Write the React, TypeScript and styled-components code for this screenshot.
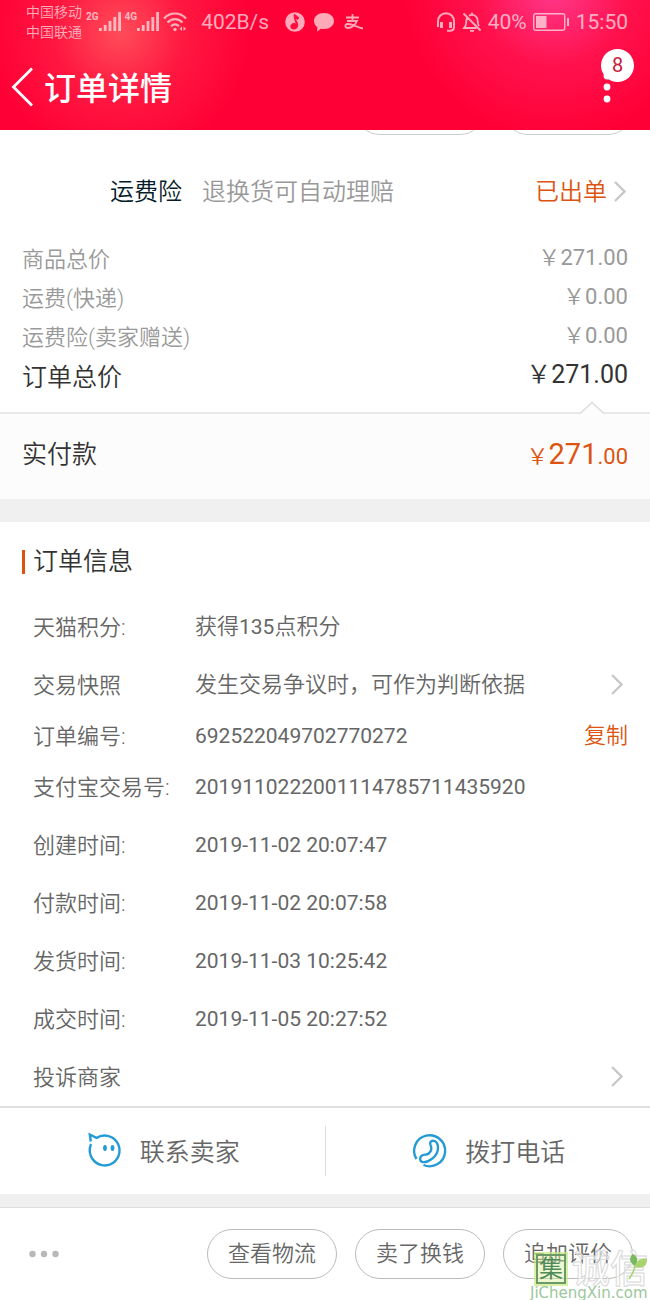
import React from 'react';
import styled, { createGlobalStyle } from 'styled-components';

const GlobalStyle = createGlobalStyle`
  * { box-sizing: border-box; }
  body {
    margin: 0;
    background: #fff;
    color: #666;
    font-family: Roboto, "Noto Sans CJK SC", sans-serif;
    font-size: 22px;
    line-height: 32px;
    font-weight: 350;
  }
  button {
    margin: 0;
    padding: 0;
    border: 0;
    background: none;
    color: inherit;
    font: inherit;
    cursor: pointer;
  }
  svg { display: block; flex: none; }
  h1, h2, dl, dt, dd { margin: 0; font-weight: inherit; }
`;

const Page = styled.div`
  position: relative;
  overflow: hidden;
`;

const Header = styled.header`
  height: 130px;
  color: #fff;
  background:
    radial-gradient(circle 130px at 120px 32px, rgba(255, 90, 96, 0.85), rgba(255, 60, 80, 0.4) 50%, transparent),
    radial-gradient(circle 150px at calc(100% - 96px) -10px, rgba(255, 70, 160, 0.8), rgba(255, 50, 120, 0.35) 50%, transparent),
    #ff0036;
`;

const StatusBar = styled.div`
  display: flex;
  align-items: center;
  justify-content: space-between;
  height: 44px;
  padding: 0 22px 0 26px;
  color: rgba(255, 225, 230, 0.75);
  font-size: 21px;
  font-weight: 400;
`;

const StatusGroup = styled.div<{ $gap: number }>`
  display: flex;
  align-items: center;
  gap: ${(p) => p.$gap}px;
`;

const Carriers = styled.div`
  font-size: 14px;
  line-height: 20px;
  font-weight: 350;
`;

const Signal = styled.div`
  display: flex;
  align-items: flex-start;
  font-size: 10px;
  line-height: 10px;
  font-weight: 700;
`;

const Speed = styled.span`
  padding: 0 8px 0 10px;
`;

const NavBar = styled.nav`
  display: flex;
  align-items: center;
  justify-content: space-between;
  height: 86px;
  padding: 0 16px 0 11px;
`;

const NavStart = styled.div`
  display: flex;
  align-items: center;
  gap: 9px;
`;

const Title = styled.h1`
  padding-top: 3px;
  font-size: 32px;
  line-height: 44px;
  font-weight: 500;
`;

const MenuButton = styled.button`
  position: relative;
  display: flex;
  width: 34px;
  height: 76px;
`;

const Badge = styled.span`
  position: absolute;
  top: 0;
  right: 0;
  width: 33px;
  height: 33px;
  border-radius: 50%;
  background: #fff;
  color: #c8203c;
  font-size: 20px;
  line-height: 33px;
  font-weight: 400;
  text-align: center;
`;

const ClippedPills = styled.div`
  display: flex;
  align-items: flex-end;
  justify-content: flex-end;
  gap: 18px;
  height: 5px;
  padding-right: 17px;
  overflow: hidden;
`;

const PillEdge = styled.span`
  width: 130px;
  height: 50px;
  border: 1px solid #ccc;
  border-radius: 25px;
`;

const InsuranceRow = styled.button`
  display: flex;
  align-items: center;
  width: 100%;
  height: 105px;
  padding: 9px 24px 0 110px;
  font-size: 24px;
`;

const InsuranceName = styled.span`
  color: #051b28;
`;

const InsuranceNote = styled.span`
  flex: 1;
  padding-left: 20px;
  color: #999;
  text-align: left;
`;

const InsuranceState = styled.span`
  margin-right: 7px;
  color: #dd5410;
`;

const PriceList = styled.dl`
  padding: 0 22px 13px;
  border-bottom: 2px solid #e8e8e8;
`;

const PriceRow = styled.div<{ $total?: boolean }>`
  display: flex;
  justify-content: space-between;
  color: ${(p) => (p.$total ? '#333' : '#999')};
  font-size: ${(p) => (p.$total ? 25 : 22)}px;
  line-height: ${(p) => (p.$total ? 42 : 39)}px;
`;

const Amount = styled.dd`
  font-weight: 400;
  line-height: 36px;
`;

const Yen = styled.span`
  font-weight: 350;
`;

const PaidRow = styled.div`
  position: relative;
  display: flex;
  align-items: center;
  justify-content: space-between;
  height: 85px;
  padding: 0 22px 3px;
  background: #fcfcfc;
  color: #333;
  font-size: 25px;
`;

const Notch = styled.svg`
  position: absolute;
  top: -13px;
  right: 45px;
`;

const PaidAmount = styled.span`
  color: #dd5410;
  font-size: 22px;
  font-weight: 400;
`;

const PaidWhole = styled.span`
  font-size: 29px;
`;

const Divider = styled.div<{ $height: number }>`
  height: ${(p) => p.$height}px;
  background: #f0f0f0;
`;

const SectionTitle = styled.h2`
  display: flex;
  align-items: center;
  gap: 8px;
  height: 76px;
  padding: 4px 22px 0;
  color: #333;
  font-size: 25px;

  &::before {
    content: '';
    width: 3px;
    height: 24px;
    background: #dd5410;
  }
`;

const InfoRow = styled.div<{ $compact?: boolean }>`
  display: flex;
  align-items: center;
  height: ${(p) => (p.$compact ? 44 : 58)}px;
  padding: 0 22px 0 33px;
`;

const InfoLabel = styled.dt`
  width: 162px;
  padding-top: 2px;
  white-space: nowrap;
`;

const InfoValue = styled.dd<{ $numeric?: boolean }>`
  flex: 1;
  font-size: ${(p) => (p.$numeric ? 21 : 22)}px;
  font-weight: ${(p) => (p.$numeric ? 400 : 350)};
`;

const Digits = styled.span`
  font-size: 21px;
  font-weight: 400;
`;

const RowButton = styled.button`
  display: flex;
  justify-content: flex-end;
  padding-right: 5px;
`;

const CopyButton = styled.button`
  color: #dd5410;
`;

const ContactBar = styled.div`
  display: flex;
  align-items: center;
  height: 88px;
  border-top: 2px solid #e0e0e0;
`;

const ContactButton = styled.button`
  flex: 1;
  display: flex;
  align-items: center;
  justify-content: center;
  gap: 15px;
  height: 50px;
  font-size: 25px;

  & + & { border-left: 1px solid #ddd; }
`;

const ContactLabel = styled.span`
  padding-top: 3px;
`;

const ActionBar = styled.footer`
  display: flex;
  align-items: center;
  gap: 18px;
  height: 93px;
  padding: 0 17px 0 29px;
  border-top: 1px solid #ddd;
`;

const MoreButton = styled.button`
  margin-right: auto;
`;

const PillButton = styled.button`
  width: 130px;
  height: 50px;
  border: 1px solid #bbb;
  border-radius: 25px;
`;

const Watermark = styled.div`
  position: absolute;
  right: 0;
  bottom: 0;
  width: 120px;
  pointer-events: none;
`;

const WatermarkMarks = styled.div`
  display: flex;
  align-items: center;
  gap: 6px;
  height: 34px;
  padding-left: 6px;
`;

const WatermarkSeal = styled.span`
  width: 30px;
  height: 30px;
  border: 2px solid #6b9a68;
  outline: 2px solid rgba(200, 235, 130, 0.7);
  background: rgba(215, 240, 150, 0.45);
  color: #4f8a5c;
  font-size: 24px;
  line-height: 26px;
  font-weight: 400;
  text-align: center;
`;

const WatermarkName = styled.span`
  color: rgba(255, 255, 255, 0.6);
  font-size: 38px;
  line-height: 34px;
  font-weight: 500;
  white-space: nowrap;
  -webkit-text-stroke: 1px #d8d8d8;
`;

const WatermarkLeaf = styled.svg`
  position: absolute;
  top: 0;
  right: 2px;
`;

const WatermarkSite = styled.div`
  color: #9cc79c;
  font-family: "DejaVu Sans", sans-serif;
  font-size: 15px;
  line-height: 14px;
  font-weight: 400;
  white-space: nowrap;
`;

const SignalBars = () => (
  <svg width="22" height="20" viewBox="0 0 22 20" fill="currentColor">
    <path d="M0 16h2.800v3H0zM4.800 13h2.800v6H4.800zM9.600 9h2.800v10H9.600zM14.400 5h2.800v14h-2.800zM19.200 0h2.800v19h-2.800z" />
  </svg>
);

const Chevron = () => (
  <svg width="12" height="22" viewBox="0 0 12 22" fill="none" stroke="#c8c8c8" strokeWidth="2.4">
    <path d="M1 1l9.500 9.500L1 20" />
  </svg>
);

type Info = {
  label: string;
  value?: React.ReactNode;
  numeric?: boolean;
  action?: 'open' | 'copy';
};

const infoRows: Info[] = [
  { label: '天猫积分:', value: <>获得<Digits>135</Digits>点积分</> },
  { label: '交易快照', value: '发生交易争议时，可作为判断依据', action: 'open' },
  { label: '订单编号:', value: '692522049702770272', numeric: true, action: 'copy' },
  { label: '支付宝交易号:', value: '2019110222001114785711435920', numeric: true },
  { label: '创建时间:', value: '2019-11-02 20:07:47', numeric: true },
  { label: '付款时间:', value: '2019-11-02 20:07:58', numeric: true },
  { label: '发货时间:', value: '2019-11-03 10:25:42', numeric: true },
  { label: '成交时间:', value: '2019-11-05 20:27:52', numeric: true },
  { label: '投诉商家', value: '', action: 'open' },
];

const prices = [
  { label: '商品总价', amount: '271.00' },
  { label: '运费(快递)', amount: '0.00' },
  { label: '运费险(卖家赠送)', amount: '0.00' },
  { label: '订单总价', amount: '271.00', total: true },
];

export default function App() {
  return (
    <Page>
      <GlobalStyle />
      <Header>
        <StatusBar>
          <StatusGroup $gap={4}>
            <Carriers>
              <div>中国移动</div>
              <div>中国联通</div>
            </Carriers>
            <Signal>2G<SignalBars /></Signal>
            <Signal>4G<SignalBars /></Signal>
            <svg width="24" height="20" viewBox="0 0 24 20" fill="none" stroke="currentColor" strokeWidth="2.2">
              <path d="M1 6.5C7-.2 17-.2 23 6.5M4.5 10.5c4.200-4.600 10.800-4.600 15 0M8 14.300c2.500-2.600 5.500-2.600 8 0" />
              <circle cx="12" cy="17.500" r="1.700" fill="currentColor" stroke="none" />
              <path d="M19 14.500l-2.500 2.300 2.500 2.300zM20.500 14.500l2.500 2.300-2.500 2.300z" fill="currentColor" stroke="none" />
            </svg>
            <StatusGroup $gap={8}>
              <Speed>402B/s</Speed>
              <svg width="20" height="20" viewBox="0 0 20 20">
                <circle cx="10" cy="10" r="9.800" fill="currentColor" />
                <path d="M9 1.500l5.500 4.200-2 2.300-2-1.200c1.800 2.600 3 4.800 2.600 7.200-.5 3-3.800 4.500-6.300 3-2.500-1.700-1.500-5.500 2-6 .8 0 1.400.1 1.900.4C9.800 8.500 8 5.500 9 1.500z" fill="#ff0f40" />
              </svg>
              <svg width="22" height="20" viewBox="0 0 22 20" fill="currentColor">
                <path d="M11 1c5.800 0 10 3.500 10 8s-4.200 8-10 8c-1 0-2-.1-3-.3L4 19.500l.4-4.200C2.300 13.800 1 11.600 1 9c0-4.500 4.200-8 10-8z" />
              </svg>
              <svg width="20" height="18" viewBox="0 0 20 18" fill="none" stroke="currentColor" strokeWidth="1.800">
                <path d="M3 4.500h13M9.500 1v7M4 8h10c-1.500 4-5.500 7-9 7-3.500 0-3.500-4 0-4 5 0 9 3.500 15 4.500" />
              </svg>
            </StatusGroup>
          </StatusGroup>
          <StatusGroup $gap={6}>
            <svg width="20" height="20" viewBox="0 0 20 20" fill="none" stroke="currentColor" strokeWidth="2">
              <path d="M2 15V9.500C2 4.500 5.500 1.200 10 1.200s8 3.300 8 8.300V15c0 2.500-1.500 3.800-4 3.800h-3" />
              <path d="M5.500 10v6M14.500 10v6" strokeWidth="3" />
            </svg>
            <svg width="20" height="20" viewBox="0 0 20 20" fill="none" stroke="currentColor" strokeWidth="1.800">
              <path d="M1.500 1.500l17 17M5 6c-.8 1.500-.8 3-.8 5 0 2-1 3.500-2.200 5h12.500M7 3.800C8 3 9 2.800 10 2.800c3.500 0 5.700 2.700 5.700 6.200 0 2 .3 3.700 1.300 5M10 .5v2M8 18.800h4" />
            </svg>
            <span>40%</span>
            <svg width="37" height="18" viewBox="0 0 37 18" fill="none" stroke="currentColor">
              <rect x=".7" y=".7" width="31" height="16.600" rx="2" strokeWidth="1.400" />
              <path d="M3 3h10.500v12H3zM34 5h2v8h-2z" fill="currentColor" stroke="none" />
            </svg>
            <span>15:50</span>
          </StatusGroup>
        </StatusBar>
        <NavBar>
          <NavStart>
            <button aria-label="返回">
              <svg width="24" height="40" viewBox="0 0 24 40" fill="none" stroke="#fff" strokeWidth="2.800">
                <path d="M21 1.500L2.500 20 21 38.500" />
              </svg>
            </button>
            <Title>订单详情</Title>
          </NavStart>
          <MenuButton aria-label="更多">
            <svg width="14" height="76" viewBox="0 0 14 76" fill="#fff">
              <circle cx="7" cy="27" r="3.400" />
              <circle cx="7" cy="38" r="3.400" />
              <circle cx="7" cy="50" r="3.400" />
            </svg>
            <Badge>8</Badge>
          </MenuButton>
        </NavBar>
      </Header>

      <ClippedPills aria-hidden>
        <PillEdge />
        <PillEdge />
      </ClippedPills>
      <InsuranceRow>
        <InsuranceName>运费险</InsuranceName>
        <InsuranceNote>退换货可自动理赔</InsuranceNote>
        <InsuranceState>已出单</InsuranceState>
        <Chevron />
      </InsuranceRow>

      <PriceList>
        {prices.map((p) => (
          <PriceRow key={p.label} $total={p.total}>
            <dt>{p.label}</dt>
            <Amount><Yen>￥</Yen>{p.amount}</Amount>
          </PriceRow>
        ))}
      </PriceList>
      <PaidRow>
        <Notch width="26" height="14" viewBox="0 0 26 14">
          <path d="M1 13L13 1.500 25 13v1H1z" fill="#fcfcfc" />
          <path d="M1 12.500L13 1.500l12 11" fill="none" stroke="#ddd" strokeWidth="1.500" />
        </Notch>
        <span>实付款</span>
        <PaidAmount><Yen>￥</Yen><PaidWhole>271</PaidWhole>.00</PaidAmount>
      </PaidRow>
      <Divider $height={23} />

      <SectionTitle>订单信息</SectionTitle>
      <dl>
        {infoRows.map((row) => (
          <InfoRow key={row.label} $compact={row.action === 'copy'}>
            <InfoLabel>{row.label}</InfoLabel>
            <InfoValue $numeric={row.numeric}>{row.value}</InfoValue>
            {row.action === 'copy' && <CopyButton>复制</CopyButton>}
            {row.action === 'open' && (
              <RowButton aria-label={row.label}><Chevron /></RowButton>
            )}
          </InfoRow>
        ))}
      </dl>

      <ContactBar>
        <ContactButton>
          <svg width="40" height="40" viewBox="0 0 40 40" fill="none" stroke="#259bd6" strokeWidth="2.400">
            <path d="M5.800 10.500L4.800 3.500l6.700 3.400c7-4.500 16-2.200 20.500 4.200 4.600 7 2.800 16-4 20.900-7 4.500-16 2.600-20.700-4.200C4.500 23.300 4 18 6 13" />
            <ellipse cx="20" cy="17" rx="1.900" ry="3" fill="#259bd6" stroke="none" />
            <ellipse cx="27.500" cy="17" rx="1.900" ry="3" fill="#259bd6" stroke="none" />
          </svg>
          <ContactLabel>联系卖家</ContactLabel>
        </ContactButton>
        <ContactButton>
          <svg width="40" height="40" viewBox="0 0 40 40" fill="none" stroke="#259bd6" strokeWidth="2.400">
            <path d="M6.500 28A15.500 15.500 0 1 1 13.500 34" />
            <path d="M20.500 14c-1-2.300.3-4.300 2.500-4.300 3.500 0 5 3.500 5 7 0 5-2.500 8.500-6 11-3 2.300-7 4-9.800 3.200-2.700-1-2.700-4.400-.5-6.200 2.300-1.700 5-.4 7-2.200 2.500-2.200 3.300-5.500 1.800-8.500z" />
          </svg>
          <ContactLabel>拨打电话</ContactLabel>
        </ContactButton>
      </ContactBar>
      <Divider $height={13} />

      <ActionBar>
        <MoreButton aria-label="更多操作">
          <svg width="30" height="8" viewBox="0 0 30 8" fill="#b8b8b8">
            <circle cx="3.500" cy="4" r="3.200" />
            <circle cx="15" cy="4" r="3.200" />
            <circle cx="26.500" cy="4" r="3.200" />
          </svg>
        </MoreButton>
        <PillButton>查看物流</PillButton>
        <PillButton>卖了换钱</PillButton>
        <PillButton>追加评价</PillButton>
      </ActionBar>

      <Watermark>
        <WatermarkMarks>
          <WatermarkSeal>集</WatermarkSeal>
          <WatermarkName>诚信</WatermarkName>
        </WatermarkMarks>
        <WatermarkLeaf width="20" height="28" viewBox="0 0 20 28">
          <path d="M7 14C2 11 0 6 5 2c4 2 6 6 2 12z" fill="#79b861" />
          <path d="M7 15c1-7 6-9 12-8 0 7-4 10-12 8z" fill="#a9d36c" />
          <path d="M7 14c-1 5-3 9-6 13" fill="none" stroke="#a9d36c" strokeWidth="1.500" />
        </WatermarkLeaf>
        <WatermarkSite>JiChengXin.com</WatermarkSite>
      </Watermark>
    </Page>
  );
}
